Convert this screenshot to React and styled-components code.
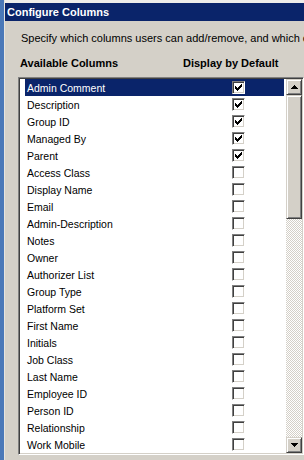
import React from "react";
import styled, { createGlobalStyle } from "styled-components";

const columns = [
  { name: "Admin Comment", on: true },
  { name: "Description", on: true },
  { name: "Group ID", on: true },
  { name: "Managed By", on: true },
  { name: "Parent", on: true },
  { name: "Access Class" },
  { name: "Display Name" },
  { name: "Email" },
  { name: "Admin-Description" },
  { name: "Notes" },
  { name: "Owner" },
  { name: "Authorizer List" },
  { name: "Group Type" },
  { name: "Platform Set" },
  { name: "First Name" },
  { name: "Initials" },
  { name: "Job Class" },
  { name: "Last Name" },
  { name: "Employee ID" },
  { name: "Person ID" },
  { name: "Relationship" },
  { name: "Work Mobile" },
];

// classic 7x7 check glyph
const CHECK = [
  "......#",
  ".....##",
  "#...###",
  "##.###.",
  "#####..",
  ".###...",
  "..#....",
];

const CheckMark = () => (
  <svg width="7" height="7" viewBox="0 0 7 7" shapeRendering="crispEdges">
    {CHECK.map((row, y) =>
      row.split("").map((c, x) =>
        c === "#" ? <rect key={`${x}-${y}`} x={x} y={y} width="1" height="1" fill="#000" /> : null
      )
    )}
  </svg>
);

const Arrow = ({ down }) => (
  <svg width="7" height="4" viewBox="0 0 7 4" shapeRendering="crispEdges">
    {down ? (
      <path d="M0 0h7v1H0zM1 1h5v1H1zM2 2h3v1H2zM3 3h1v1H3z" fill="#000" />
    ) : (
      <path d="M3 0h1v1H3zM2 1h3v1H2zM1 2h5v1H1zM0 3h7v1H0z" fill="#000" />
    )}
  </svg>
);

const App = () => {
  return (
    <>
      <GlobalStyle />
      <Page>
        <SideEdge />
        <Window>
          <TopGap />
          <TitleBar>Configure Columns</TitleBar>
          <Body>
            <Hint>Specify which columns users can add/remove, and which columns are displayed by default.</Hint>
            <Headers>
              <span>Available Columns</span>
              <span>Display by Default</span>
            </Headers>
            <ListBox>
              <Rows>
                {columns.map((c, i) => (
                  <Row key={c.name} selected={i === 0}>
                    <Label>{c.name}</Label>
                    <Box>{c.on && <CheckMark />}</Box>
                  </Row>
                ))}
              </Rows>
              <ScrollBar>
                <ScrollButton>
                  <Arrow />
                </ScrollButton>
                <Thumb />
                <Track />
                <ScrollButton>
                  <Arrow down />
                </ScrollButton>
              </ScrollBar>
            </ListBox>
          </Body>
        </Window>
      </Page>
    </>
  );
};
export default App;

const GlobalStyle = createGlobalStyle`
  html, body {
    margin: 0;
    padding: 0;
    background: #d4d0c8;
  }
  body {
    font-family: "Liberation Sans", Arial, sans-serif;
    font-size: 10.5px;
    color: #000;
  }
`;

const Page = styled.div`
  display: flex;
  width: 304px;
  height: 460px;
  overflow: hidden;
`;

const SideEdge = styled.div`
  width: 4px;
  flex-shrink: 0;
  background: #4a78b8;
  border-right: 1px solid #e6e4de;
`;

const Window = styled.div`
  flex: 1;
  display: flex;
  flex-direction: column;
  min-width: 0;
`;

const TopGap = styled.div`
  height: 3px;
  background: #eeedea;
`;

const TitleBar = styled.div`
  height: 18px;
  background: #0a246a;
  color: #fff;
  font-weight: bold;
  font-size: 11px;
  line-height: 18px;
  padding-left: 2px;
  white-space: nowrap;
`;

const Body = styled.div`
  display: flex;
  flex-direction: column;
  padding: 11px 0 0 13px;
`;

const Hint = styled.div`
  white-space: nowrap;
  overflow: hidden;
  font-size: 11px;
  line-height: 13px;
  padding-left: 3px;
`;

const Headers = styled.div`
  display: flex;
  margin-top: 12px;
  padding-left: 2px;
  font-weight: bold;
  font-size: 11px;
  line-height: 13px;
  white-space: nowrap;
  span:first-child {
    width: 163px;
  }
`;

const ListBox = styled.div`
  display: flex;
  margin-top: 7px;
  height: 374px;
  border: 1px solid;
  border-color: #808080 #fff #fff #808080;
  box-shadow: inset 1px 1px 0 #404040, inset -1px -1px 0 #d4d0c8;
  padding: 1px;
  background: #fff;
`;

const Rows = styled.div`
  flex: 1;
  overflow: hidden;
  padding: 0 2px 0 5px;
`;

const Row = styled.div`
  display: flex;
  align-items: center;
  height: 17px;
  padding-left: 2px;
  background: ${(p) => (p.selected ? "#0a246a" : "transparent")};
  color: ${(p) => (p.selected ? "#fff" : "#000")};
  white-space: nowrap;
`;

const Label = styled.span`
  width: 205px;
  flex-shrink: 0;
`;

const Box = styled.span`
  box-sizing: border-box;
  width: 13px;
  height: 13px;
  display: flex;
  align-items: center;
  justify-content: center;
  background: #fff;
  border: 1px solid;
  border-color: #808080 #fff #fff #808080;
  box-shadow: inset 1px 1px 0 #404040, inset -1px -1px 0 #d4d0c8;
`;

const ScrollBar = styled.div`
  width: 16px;
  display: flex;
  flex-direction: column;
`;

const raised = `
  box-sizing: border-box;
  background: #d4d0c8;
  border: 1px solid;
  border-color: #d4d0c8 #404040 #404040 #d4d0c8;
  box-shadow: inset 1px 1px 0 #fff, inset -1px -1px 0 #808080;
`;

const ScrollButton = styled.div`
  ${raised}
  height: 16px;
  display: flex;
  align-items: center;
  justify-content: center;
`;

const Thumb = styled.div`
  ${raised}
  height: 124px;
`;

const Track = styled.div`
  flex: 1;
  background-color: #fff;
  background-image: conic-gradient(#d4d0c8 25%, #fff 0 50%, #d4d0c8 0 75%, #fff 0);
  background-size: 2px 2px;
`;
